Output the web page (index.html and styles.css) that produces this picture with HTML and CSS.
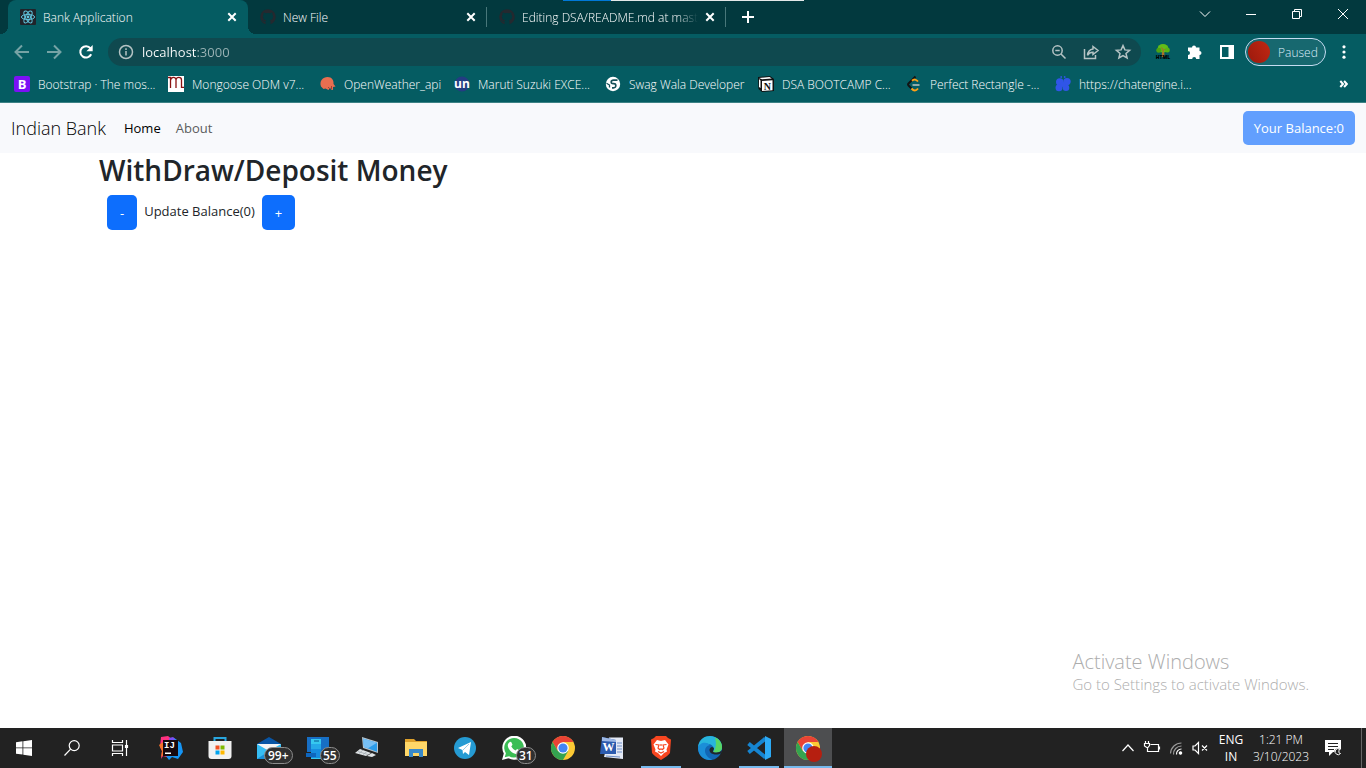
FILE: index.html
```html
<!DOCTYPE html>
<html lang="en">
<head>
<meta charset="utf-8">
<title>Bank Application</title>
<link rel="stylesheet" href="styles.css">
</head>
<body>
<div class="desktop">
  <header class="browser">
    <div class="load-strip"></div>
    <div class="tabstrip">
      <div class="tab tab-active">
        <svg class="icon16" viewBox="0 0 16 16"><rect width="16" height="16" rx="1" fill="#20232a"/><g fill="none" stroke="#61c5de" stroke-width="1"><ellipse cx="8" cy="8" rx="6.6" ry="2.6"/><ellipse cx="8" cy="8" rx="6.6" ry="2.6" transform="rotate(60 8 8)"/><ellipse cx="8" cy="8" rx="6.6" ry="2.6" transform="rotate(120 8 8)"/></g><circle cx="8" cy="8" r="1.4" fill="#61c5de"/></svg>
        <span class="tab-title">Bank Application</span>
        <button class="tab-close" aria-label="Close tab"><svg viewBox="0 0 10 10"><path d="M1.3 1.3 8.7 8.7M8.7 1.3 1.3 8.7"/></svg></button>
      </div>
      <div class="tab">
        <svg class="icon16" viewBox="0 0 16 16"><path d="M8 0.3a7.7 7.7 0 0 0-2.5 15V12.9C3.400 13.300 3 11.900 2.300 11.500c-.8-.6.5-.6 1 .2.7 1.100 1.500 1 2.300.7 0-.5.3-.9.5-1.100C4 11 2.900 10 2.900 7.500c0-.9.3-1.500.8-2-.1-.4-.3-1.100.1-2.100 0 0 .9-.1 2.100.9a7 7 0 0 1 4.200 0c1.200-1 2.100-.9 2.100-.9.4 1 .2 1.700.1 2.100.5.5.8 1.100.8 2 0 2.500-1.200 3.500-3.200 3.800.4.3.6.8.6 1.600v2.400A7.700 7.700 0 0 0 8 .3z" fill="#24292f"/></svg>
        <span class="tab-title">New File</span>
        <button class="tab-close" aria-label="Close tab"><svg viewBox="0 0 10 10"><path d="M1.3 1.3 8.7 8.7M8.7 1.3 1.3 8.7"/></svg></button>
      </div>
      <div class="tab">
        <svg class="icon16" viewBox="0 0 16 16"><path d="M8 0.3a7.7 7.7 0 0 0-2.500 15V12.9C3.400 13.300 3 11.900 2.300 11.500c-.8-.6.5-.6 1 .2.7 1.100 1.500 1 2.300.7 0-.5.3-.9.5-1.100C4 11 2.900 10 2.900 7.500c0-.9.3-1.500.8-2-.1-.4-.3-1.100.1-2.100 0 0 .9-.1 2.100.9a7 7 0 0 1 4.200 0c1.200-1 2.100-.9 2.100-.9.4 1 .2 1.700.1 2.100.5.5.8 1.100.8 2 0 2.500-1.200 3.500-3.200 3.800.4.3.6.8.6 1.600v2.400A7.700 7.700 0 0 0 8 .3z" fill="#24292f"/></svg>
        <span class="tab-title tab-fade">Editing DSA/README.md at mast</span>
        <button class="tab-close" aria-label="Close tab"><svg viewBox="0 0 10 10"><path d="M1.3 1.3 8.7 8.7M8.7 1.3 1.3 8.7"/></svg></button>
      </div>
      <button class="new-tab" aria-label="New tab"><svg viewBox="0 0 12 12"><path d="M6 0v12M0 6h12"/></svg></button>
      <div class="window-controls">
        <button aria-label="Search tabs"><svg viewBox="0 0 12 12"><path d="M1 3.500 6 8.500 11 3.500"/></svg></button>
        <button aria-label="Minimize"><svg viewBox="0 0 12 12"><path d="M1 6.500h10"/></svg></button>
        <button aria-label="Restore"><svg viewBox="0 0 12 12"><path d="M1.500 3.500h7v7h-7zM3.500 3.500v-2h7v7h-2"/></svg></button>
        <button aria-label="Close"><svg viewBox="0 0 12 12"><path d="M1 1 11 11M11 1 1 11"/></svg></button>
      </div>
    </div>

    <div class="toolbar">
      <div class="nav-buttons">
        <button class="dim" aria-label="Back"><svg viewBox="0 0 16 16"><path d="M15 8H2M8 1.500 1.500 8 8 14.500"/></svg></button>
        <button class="dim" aria-label="Forward"><svg viewBox="0 0 16 16"><path d="M1 8h13M8 1.500 14.500 8 8 14.500"/></svg></button>
        <button class="reload" aria-label="Reload"><svg viewBox="0 0 16 16"><path d="M13.200 10.300A5.700 5.700 0 1 1 12.500 4.300"/><path class="solid" d="M14.700 1v6.300H8.400z"/></svg></button>
      </div>
      <div class="omnibox">
        <svg class="icon16 outline" viewBox="0 0 16 16"><circle cx="8" cy="8" r="6.500"/><path d="M8 7v4.500M8 4.300v1.600"/></svg>
        <input class="address" type="text" value="localhost:3000" aria-label="Address">
        <button aria-label="Zoom"><svg class="icon16 outline" viewBox="0 0 16 16"><circle cx="6.500" cy="6.500" r="4.700"/><path d="M10 10 14.500 14.500M4.300 6.500h4.400"/></svg></button>
        <button aria-label="Share"><svg class="icon16 outline" viewBox="0 0 16 16"><path d="M1.500 5v9.500h11V11M10 2.500 15 6.500 10 10.500V8.300C7.500 8.200 5.700 9.300 4.500 11.300 4.800 7.500 6.800 5.300 10 4.900z"/></svg></button>
        <button aria-label="Bookmark this page"><svg class="icon16 outline" viewBox="0 0 16 16"><path d="m8 1.600 1.900 4.300 4.700.4-3.600 3.100 1.100 4.600L8 11.600 3.900 14 5 9.400 1.400 6.300l4.700-.4z"/></svg></button>
      </div>
      <div class="extensions">
        <button aria-label="HTML Tree"><svg class="icon16" viewBox="0 0 16 16"><path d="M7.300 6h1.600l.8 7H6.500z" fill="#b5772b"/><ellipse cx="8" cy="4.300" rx="5.300" ry="4.200" fill="#62bd18"/><circle cx="3.800" cy="6.300" r="2.500" fill="#4da312"/><circle cx="12.300" cy="6" r="2.500" fill="#58b413"/><path d="M8 11V5L6 3.500M8 7l2-2" stroke="#a96a28" fill="none"/><text x="8" y="15" text-anchor="middle" font-size="5" font-weight="800" font-family="Open Sans, sans-serif">HTML</text></svg></button>
        <button aria-label="Extensions"><svg class="icon16" viewBox="0 0 16 16"><path d="M5 3.500a2 2 0 1 1 4 0h3.500V7a2 2 0 1 1 0 4v4H9.200a2 2 0 0 0-4 0H1v-4a2 2 0 0 0 0-4V3.500z" fill="#fff"/></svg></button>
        <button aria-label="Side panel"><svg class="icon16" viewBox="0 0 16 16"><path fill="#fff" fill-rule="evenodd" d="M1 1h14v14H1zM3 3v10h6.500V3z"/></svg></button>
        <button class="profile"><span class="avatar"></span>Paused</button>
        <button aria-label="Menu"><svg class="icon16" viewBox="0 0 16 16"><g fill="#fff"><circle cx="8" cy="2.800" r="1.600"/><circle cx="8" cy="8" r="1.600"/><circle cx="8" cy="13.200" r="1.600"/></g></svg></button>
      </div>
    </div>

    <nav class="bookmarks" aria-label="Bookmarks">
      <a href="#"><svg class="icon16" viewBox="0 0 16 16"><rect width="16" height="16" rx="2" fill="#7b11f5"/><text x="8" y="13" text-anchor="middle" font-size="13" font-weight="700" fill="#fff" font-family="Open Sans, sans-serif">B</text></svg>Bootstrap · The mos...</a>
      <a href="#"><svg class="icon16" viewBox="0 0 16 16"><path fill="#fff" d="M0 0h16v16H0z"/><path d="M0 1.500h2.500V12M2.500 4.500C3 .5 8 .5 8 4v8M8 4c0-3.500 5.500-3.500 5.500 0v7.300H16" fill="none" stroke="#8a1212" stroke-width="1.300"/></svg>Mongoose ODM v7...</a>
      <a href="#"><svg class="icon16" viewBox="0 0 16 16"><path fill="#e96e50" d="M1 10.500C-1 5 3 1 7.500 1S14 4.500 13.500 8l2 2.500-2.500.5v3l-2-.5-1-2-1.500 2.500-3-1.500-2 .5z"/><path d="m8 11 2 2M11.500 10v3" stroke="#a63f35" stroke-width="1"/></svg>OpenWeather_api</a>
      <a href="#"><svg class="icon16" viewBox="0 0 16 16"><circle cx="8" cy="8" r="7.500" fill="#243c82"/><text x="8" y="12" text-anchor="middle" font-size="12" font-weight="700" fill="#fff" font-family="Open Sans, sans-serif">un</text></svg>Maruti Suzuki EXCE...</a>
      <a href="#"><svg class="icon16" viewBox="0 0 16 16"><circle cx="8" cy="8" r="7.200" fill="#fff"/><path d="M12.500 4.200H8.500Q6.200 4.200 6.200 6T8.500 7.600t2.300 2-2.300 2.200H7" stroke="#175159" stroke-width="1.700" fill="none"/><path d="M1.500 7.200 4.500 9v2.500" stroke="#175159" stroke-width="1.300" fill="none"/></svg>Swag Wala Developer</a>
      <a href="#"><svg class="icon16" viewBox="0 0 16 16"><path fill="#111" d="M0 1 12 0l4 3v12l-12 1-3.500-3z"/><path fill="#fff" d="M1 2 11.500 1l2.300 1.500L4 3.300zM4 5l10.500-.7v10L4 15zM1 3l1.500 1.500V12L1 11z"/><text x="9.300" y="13.600" text-anchor="middle" font-size="10" font-weight="700" fill="#111" font-family="Liberation Serif, serif">N</text></svg>DSA BOOTCAMP C...</a>
      <a href="#"><svg class="icon16" viewBox="0 0 16 16"><path d="M9.500 .5 2.500 7.500Q1.500 8.500 2.500 9.500L5.500 12.500" fill="none" stroke="#131313" stroke-width="1.900"/><path d="M6 4.800Q9 2 12 5.500M5.500 12.500Q9 16.500 12 12.500" fill="none" stroke="#ffa116" stroke-width="1.900"/><path d="M6.500 9H13.500" stroke="#b5c0bd" stroke-width="1.600"/></svg>Perfect Rectangle -...</a>
      <a href="#"><svg class="icon16" viewBox="0 0 16 16"><g fill="#3055e8"><circle cx="4.800" cy="6" r="3.800"/><circle cx="12" cy="5.600" r="3.700"/><circle cx="4" cy="11.700" r="3.500"/><circle cx="11" cy="11.700" r="3.300"/><circle cx="8" cy="8.500" r="2.500"/><circle cx="6.200" cy="1" r=".9"/><circle cx="9.700" cy="1" r=".9"/></g></svg>https://chatengine.i...</a>
      <button class="overflow" aria-label="More bookmarks"><svg viewBox="0 0 8 8"><path d="m.8 1 2.700 3L.8 7M4.600 1l2.700 3-2.700 3"/></svg></button>
    </nav>
  </header>

  <main class="page">
    <nav class="navbar">
      <a class="brand" href="#">Indian Bank</a>
      <a class="nav-link current" href="#">Home</a>
      <a class="nav-link" href="#">About</a>
      <button class="btn balance" disabled>Your Balance:0</button>
    </nav>
    <section class="container">
      <h2>WithDraw/Deposit Money</h2>
      <div class="actions">
        <button class="btn">-</button>
        <span>Update Balance(0)</span>
        <button class="btn">+</button>
      </div>
    </section>
  </main>

  <aside class="watermark">
    <p class="watermark-title">Activate Windows</p>
    <p>Go to Settings to activate Windows.</p>
  </aside>

  <footer class="taskbar">
    <div class="system">
      <button aria-label="Start"><svg class="icon16" viewBox="0 0 16 16"><path fill="#fff" d="M0 2.200 6.500 1.300v6.200H0zM7.300 1.200 16 0v7.500H7.300zM0 8.300h6.500v6.300L0 13.700zM7.300 8.300H16V16l-8.700-1.200z"/></svg></button>
      <button aria-label="Search"><svg class="icon16 line" viewBox="0 0 16 16"><circle cx="10.200" cy="5.600" r="5"/><path d="M6.600 9.200.5 15.500"/></svg></button>
      <button aria-label="Task view"><svg class="icon16 line" viewBox="0 0 16 16"><path d="M.5 0v2.500h10V0M.5 16v-2.500h10V16M.5 5h10v6H.5zM14.500 0v16"/><path fill="#fff" d="M13.500 5.500h2v2h-2z"/></svg></button>
    </div>
    <div class="apps">
      <button aria-label="IntelliJ IDEA"><svg class="icon24" viewBox="0 0 24 24"><path fill="#ff3180" d="m2 1 7-1 6 5-4 17-7-2-2 3 1-8-2-4z"/><path fill="#f8732d" d="M0 9 4 6l3 11-5 4 1-6z"/><path fill="#7c4df4" d="m10 2 4-1 5 4-8 2z"/><path fill="#1595f5" d="m15 2 7 5 2 9-5 7-6-2-3 3-3-4 11-9z"/><path fill="#16080e" d="M4 4h15v16H4z"/><text x="5" y="12" font-size="9" font-weight="700" fill="#fff" font-family="Liberation Mono, monospace">IJ</text><path fill="#fff" d="M6 16.500h6V18H6z"/></svg></button>
      <button aria-label="Microsoft Store"><svg class="icon24" viewBox="0 0 24 24"><path d="M6.500 6V2h11v4" fill="none" stroke="#29a7df" stroke-width="2"/><path fill="#f1f1f1" d="M.5 5h23v15q0 3-3 3h-17q-3 0-3-3z"/><path fill="#f25022" d="M7.500 9.500h4v4h-4z"/><path fill="#7fba00" d="M12.500 9.500h4v4h-4z"/><path fill="#00a4ef" d="M7.500 14.500h4v4h-4z"/><path fill="#ffb900" d="M12.500 14.500h4v4h-4z"/></svg></button>
      <button aria-label="Mail"><svg class="icon24" viewBox="0 0 24 24"><path fill="#0855a5" d="M0 8 12 1l12 7v4H0z"/><path fill="#f5f5f5" d="M0 8h24v7H0z"/><path fill="#36bdf4" d="m0 8 12 7 12-7v15H0z"/><path fill="#178ed8" d="m0 23 15-10 9 10z"/></svg><span class="badge">99+</span></button>
      <button aria-label="Phone Link"><svg class="icon24" viewBox="0 0 24 24"><path fill="#176fc5" d="M1 1h22v15H1z"/><path fill="#36c8ef" d="M5 3h10v20H5z"/><path fill="#25a9e8" d="M5 8h10v8H5z"/><path fill="#168de0" d="M5 13h10v9H5z"/><path fill="#0e66be" d="M0 17h10v4H0z"/><path d="M8 5h5" stroke="#075a92"/></svg><span class="badge badge-short">55</span></button>
      <button aria-label="Remote desktop"><svg class="icon24" viewBox="0 0 24 24"><path fill="#b9c4cc" d="m7 1 16 5v11L8 12z"/><path fill="#2c9cea" d="m8 2.500 14 4.300v9L9 11z"/><path fill="#77bff4" d="m8 2.500 14 4.300-9 5.500L9 11z"/><path fill="#dfe3e5" d="m5 13 11 4-5 3-11-3zM17 17l4 2-4 2-5-1z"/><path d="m3 15.500 10 3M8 14l-4 3.500m8-2-4 3" stroke="#9ba4aa" stroke-width=".7"/></svg></button>
      <button aria-label="File Explorer"><svg class="icon24" viewBox="0 0 24 24"><path fill="#dfa12b" d="M1 3h9l2 2h11v5H1z"/><path fill="#ffd768" d="M1 6h22v14H1z"/><path fill="#3989c9" d="M5 13h14v8h-4v-4H9v4H5z"/></svg></button>
      <button aria-label="Telegram"><svg class="icon24" viewBox="0 0 24 24"><circle cx="12" cy="12" r="11" fill="#259bd3"/><path fill="#fff" d="m5 12 13-6-2 13-4-3-2 2-.5-4z"/><path d="m10 14 6-6" stroke="#9dcee5"/></svg></button>
      <button aria-label="WhatsApp"><svg class="icon24" viewBox="0 0 24 24"><path fill="#fff" d="M0 24 1.800 17.500A12 12 0 1 1 6.500 22.200z"/><path fill="#3bbd55" d="m2.700 21.300 1.200-4.100a9.800 9.800 0 1 1 3.200 3z"/><path fill="#fff" d="M8 6q1-.5 1.500.5l1 2.300-1.200 1.700q1.500 2.800 4.200 4l1.600-1.600 3 1.500c.5 3-2.500 4-4.200 3.500C9.500 17 6 13 5.800 9.500 5.700 8 7 6.500 8 6z"/></svg><span class="badge badge-short">31</span></button>
      <button aria-label="Chrome"><svg class="icon24" viewBox="0 0 24 24"><circle cx="12" cy="12" r="12" fill="#fcc934"/><path fill="#e94335" d="M1.600 6A12 12 0 0 1 22.400 6H12l-5.200 9z"/><path fill="#34a350" d="M1.600 6A12 12 0 0 0 12 24l5.200-9H6.800z"/><circle cx="12" cy="12" r="5.800" fill="#fff"/><circle cx="12" cy="12" r="4.600" fill="#4285f4"/></svg></button>
      <button aria-label="Word"><svg class="icon24" viewBox="0 0 24 24"><path fill="#e4e9f5" d="M9 1.500h14V23L4 21z"/><path d="M17 7h5m-5 3h5m-5 3h5m-5 3h5M6 20l14 1" stroke="#6e8fc8"/><path fill="#2c5baf" d="m2 1 14 3v14L0 18z"/><path fill="#9db8e5" d="m2 1 14 3v2L2 5z"/><text x="8.500" y="15" text-anchor="middle" font-size="12" font-weight="700" fill="#fff" font-family="Liberation Serif, serif">W</text></svg></button>
      <button class="running" aria-label="Brave"><svg class="icon24" viewBox="0 0 24 24"><path fill="#f74620" d="m7 0-2 2-3 1.500L3 17q2 3 9 7 7-4 9-7l1-13.500L19 2l-2-2z"/><path fill="#fff" d="m8 4 4 1 4-1 3.500 4.500-2 5 .5 2-3 1.500-3 3-3-3L6 15.500l.5-2-2-5z"/><path d="m6.500 8.500 3.500.5-1 3 1.500 1.500L12 13l1.500.5L15 12l-1-3 3.500-.5M12 8v2M9 15.500l3 1.500 3-1.500" stroke="#f74620" stroke-width="1.200" fill="none"/></svg></button>
      <button aria-label="Edge"><svg class="icon24" viewBox="0 0 24 24"><circle cx="12" cy="12" r="12" fill="#1267b5"/><path fill="#28b5dd" d="M0 11C1 3 7 0 12 0c7 0 12 5 12 11 0 5-5 7-9 5 3-6-3-9-8-8-4 .500-6 2-7 3z"/><path fill="#58d765" d="M17 1.500c5 2 7 6 7 9.500 0 5-5 7-9 5 4-4 3-11 2-14.500z"/><path fill="#1b8ed8" d="M0 12c1-5 8-7 12-3-6 1-7 8-1 13 1 .900 3 1.500 4 1.500C6 26 0 19 0 12z"/><path fill="#20262c" d="M14 11c-4 1-3 6 1 7 3 1 6 .3 8-.5l1-3q-3 2.500-7 2-3-.5-1.500-2.500t-1.500-3z"/></svg></button>
      <button class="running" aria-label="Visual Studio Code"><svg class="icon24" viewBox="0 0 24 24"><path d="m1.500 7.500 17 14M1.500 16.500l17-14" stroke="#1685d1" stroke-width="4" fill="none"/><path fill="#2caaf5" d="m18 0 6 3v18l-6 3z"/></svg></button>
      <button class="running active" aria-label="Chrome, Bank Application"><svg class="icon24 spill" viewBox="0 0 24 24"><circle cx="12" cy="12" r="12" fill="#fcc934"/><path fill="#e94335" d="M1.600 6A12 12 0 0 1 22.400 6H12l-5.200 9z"/><path fill="#34a350" d="M1.600 6A12 12 0 0 0 12 24l5.200-9H6.800z"/><circle cx="12" cy="12" r="5.800" fill="#fff"/><circle cx="12" cy="12" r="4.600" fill="#4285f4"/><circle cx="18" cy="18" r="8" fill="#b61f10"/></svg></button>
    </div>
    <div class="tray">
      <button aria-label="Hidden icons"><svg class="icon16 line" viewBox="0 0 16 16"><path d="m2.500 11 5.500-6 5.500 6"/></svg></button>
      <button aria-label="Battery"><svg class="icon16 line" viewBox="0 0 16 16"><path d="M6.500 4.500h8v7H3.500V8M15.500 6.500v3M1.500 1v2m3-2v2M.5 3.500h5v2L3.500 8l-3-2z"/></svg></button>
      <button aria-label="Network"><svg class="icon16 line" viewBox="0 0 16 16"><g stroke="#999"><path d="M2.500 13.500A11 11 0 0 1 13.500 3M5.500 14.500A8 8 0 0 1 13.500 6"/></g><path d="M8.500 14.500A5 5 0 0 1 13.500 9"/><circle cx="12.500" cy="13" r="1.200" fill="#fff"/></svg></button>
      <button aria-label="Volume muted"><svg class="icon16 line" viewBox="0 0 16 16"><path d="M1 6h2l3.500-3.500v11L3 10H1zM10 5.500l5 5m0-5-5 5"/></svg></button>
      <button class="language">ENG<br>IN</button>
      <button class="clock">1:21 PM<br>3/10/2023</button>
      <button class="notify" aria-label="Notifications"><svg class="icon16" viewBox="0 0 16 16"><path fill="#fff" d="M0 0h16v12H8l-4 4v-4H0z"/><path d="M3 3.500h10M3 6.500h10M3 9.500h6" stroke="#222"/><circle cx="13" cy="12" r="3.500" fill="#222"/><path d="M14.500 9a3 3 0 1 0 1 4.500c-2 0-2-2-1-4.500z" fill="none" stroke="#fff"/></svg></button>
    </div>
  </footer>
</div>
</body>
</html>
```
FILE: styles.css
```css
* { box-sizing: border-box; }

body {
  margin: 0;
  font-family: "Open Sans", "Noto Sans", sans-serif;
  font-size: 12px;
}

button {
  border: 0;
  padding: 0;
  background: none;
  color: inherit;
  font: inherit;
  display: flex;
  align-items: center;
  justify-content: center;
}

a { color: inherit; text-decoration: none; }
p { margin: 0; }
svg { display: block; flex: none; }

.icon16 { width: 16px; height: 16px; overflow: visible; }
.icon24 { width: 24px; height: 24px; }
.spill { overflow: visible; }

.desktop {
  position: relative;
  display: flex;
  flex-direction: column;
  min-height: 100vh;
  background: #fff;
}

/* Browser frame */
.browser {
  position: relative;
  background: #055c62;
  border-bottom: 1px solid #3d8285;
  color: #fff;
  font-weight: 300;
}

.load-strip {
  position: absolute;
  top: 0;
  left: 563px;
  width: 241px;
  height: 1px;
  background: linear-gradient(90deg, #0078d7 48px, #e3e9e9 48px);
}

.tabstrip {
  display: flex;
  height: 34px;
  padding-left: 8px;
  background: #02393e;
}

.tab {
  display: flex;
  align-items: center;
  gap: 7px;
  width: 239px;
  padding: 0 11px 0 12px;
  position: relative;
}

.tab:not(.tab-active)::after {
  content: "";
  position: absolute;
  right: 0;
  top: 7px;
  width: 1px;
  height: 20px;
  background: #48777a;
}

.tab-active {
  width: 240px;
  background: #055c62;
  border-radius: 8px 8px 0 0;
}

.tab-active::before,
.tab-active::after {
  content: "";
  position: absolute;
  bottom: 0;
  width: 8px;
  height: 8px;
}

.tab-active::before {
  left: -8px;
  background: radial-gradient(circle at 0 0, #02393e 8px, #055c62 8px);
}

.tab-active::after {
  right: -8px;
  background: radial-gradient(circle at 100% 0, #02393e 8px, #055c62 8px);
}

.tab-title {
  flex: 1;
  min-width: 0;
  white-space: nowrap;
}

.tab-fade { mask-image: linear-gradient(90deg, #000 88%, transparent); }

.tab-close svg {
  width: 10px;
  height: 10px;
  fill: none;
  stroke: #fff;
  stroke-width: 2;
}

.new-tab { width: 44px; }

.new-tab svg {
  width: 12px;
  height: 12px;
  stroke: #fff;
  stroke-width: 2;
}

.window-controls {
  display: flex;
  margin-left: auto;
  height: 28px;
}

.window-controls button { width: 46px; }

.window-controls svg {
  width: 12px;
  height: 12px;
  fill: none;
  stroke: #fff;
}

.toolbar {
  display: flex;
  align-items: center;
  height: 36px;
  padding-right: 14px;
}

.nav-buttons {
  display: flex;
  gap: 16px;
  padding: 0 14px;
}

.nav-buttons svg {
  width: 16px;
  height: 16px;
  fill: none;
  stroke: #fff;
  stroke-width: 2;
}

.nav-buttons .dim svg { stroke: #76a3a5; }
.nav-buttons .solid { fill: #fff; stroke: none; }

.omnibox {
  display: flex;
  align-items: center;
  gap: 16px;
  flex: 1;
  height: 28px;
  padding: 0 10px;
  border-radius: 14px;
  background: #0f494f;
}

.address {
  flex: 1;
  min-width: 0;
  margin-left: -8px;
  padding: 0;
  border: 0;
  outline: 0;
  background: linear-gradient(90deg, #fff 54px, #9cb4b6 54px);
  background-clip: text;
  color: transparent;
  font: 13px "Open Sans", "Noto Sans", sans-serif;
}

.outline {
  fill: none;
  stroke: #b5c3c4;
  stroke-width: 1.5;
}

.extensions {
  display: flex;
  align-items: center;
  gap: 16px;
  padding-left: 14px;
}

.profile {
  width: 81px;
  height: 28px;
  margin: 0 -6px;
  padding-left: 2px;
  justify-content: flex-start;
  gap: 8px;
  border: 1px solid #c5dcf1;
  border-radius: 14px;
  background: #17686f;
  color: #dcecf9;
}

.avatar {
  width: 22px;
  height: 22px;
  border-radius: 50%;
  background: linear-gradient(60deg, #9b190d, #c12812);
}

.bookmarks {
  display: grid;
  grid-template-columns: 154px 152px 134px 151px 153px 148px 149px 1fr auto;
  align-items: center;
  height: 32px;
  padding: 0 18px 4px 14px;
  white-space: nowrap;
}

.bookmarks a {
  display: flex;
  align-items: center;
  gap: 8px;
}

.overflow svg {
  width: 9px;
  height: 8px;
  fill: none;
  stroke: #fff;
  stroke-width: 2;
}

/* Bank page */
.page {
  flex: 1;
  color: #212529;
  font-size: 13px;
}

.navbar {
  display: flex;
  align-items: center;
  height: 50px;
  padding: 0 11px;
  background: #f8f9fc;
}

.brand {
  margin-right: 18px;
  color: #000;
  font-size: 18px;
  font-weight: 300;
}

.nav-link { margin-right: 15px; color: #5b5c5d; }
.nav-link.current { color: #000; }

.btn {
  height: 35px;
  padding: 0 13px;
  border-radius: 5px;
  background: #0d6efd;
  color: #fff;
}

.balance {
  height: 34px;
  padding: 0 11px;
  margin-left: auto;
  background: #629ffe;
}

.container { padding: 0 99px; }

h2 {
  margin: 0;
  padding-bottom: 7px;
  font-size: 28px;
  font-weight: 600;
  line-height: 35px;
}

.actions {
  display: flex;
  align-items: center;
  gap: 7px;
  padding-left: 8px;
}

.actions span { padding-bottom: 3px; }

/* Activation notice over the desktop */
.watermark {
  position: absolute;
  right: 57px;
  bottom: 74px;
  color: #adadad;
  font-size: 15px;
  font-weight: 300;
  line-height: 20px;
}

.watermark-title { font-size: 20px; line-height: 25px; }

/* Taskbar */
.taskbar {
  display: flex;
  height: 40px;
  background: #222;
  color: #fff;
}

.system { display: flex; margin-right: 3px; }
.apps { display: flex; gap: 1px; }

.system button,
.apps button {
  position: relative;
  width: 48px;
  height: 40px;
}

.line { fill: none; stroke: #fff; stroke-width: 1.2; }

.running::after {
  content: "";
  position: absolute;
  bottom: 0;
  left: 4px;
  right: 4px;
  height: 2px;
  background: #76b9ed;
}

.active { background: #4d4e50; }
.active::after { left: 0; right: 0; }

.badge {
  position: absolute;
  left: 19px;
  top: 19px;
  height: 17px;
  padding: 0 3px;
  border: 1px solid #8d8d8d;
  border-radius: 9px;
  background: #303030;
  font-weight: 600;
  line-height: 15px;
}

.badge-short { left: 26px; padding: 0 2px; }

.tray {
  display: flex;
  align-items: center;
  margin-left: auto;
  margin-right: 4px;
  border-right: 1px solid #666;
}

.tray button { width: 24px; }

.tray .language,
.tray .clock {
  display: block;
  width: 38px;
  line-height: 17px;
  text-align: center;
}

.tray .clock { width: 62px; font-weight: 300; }
.tray .notify { width: 49px; padding-right: 8px; }
```
